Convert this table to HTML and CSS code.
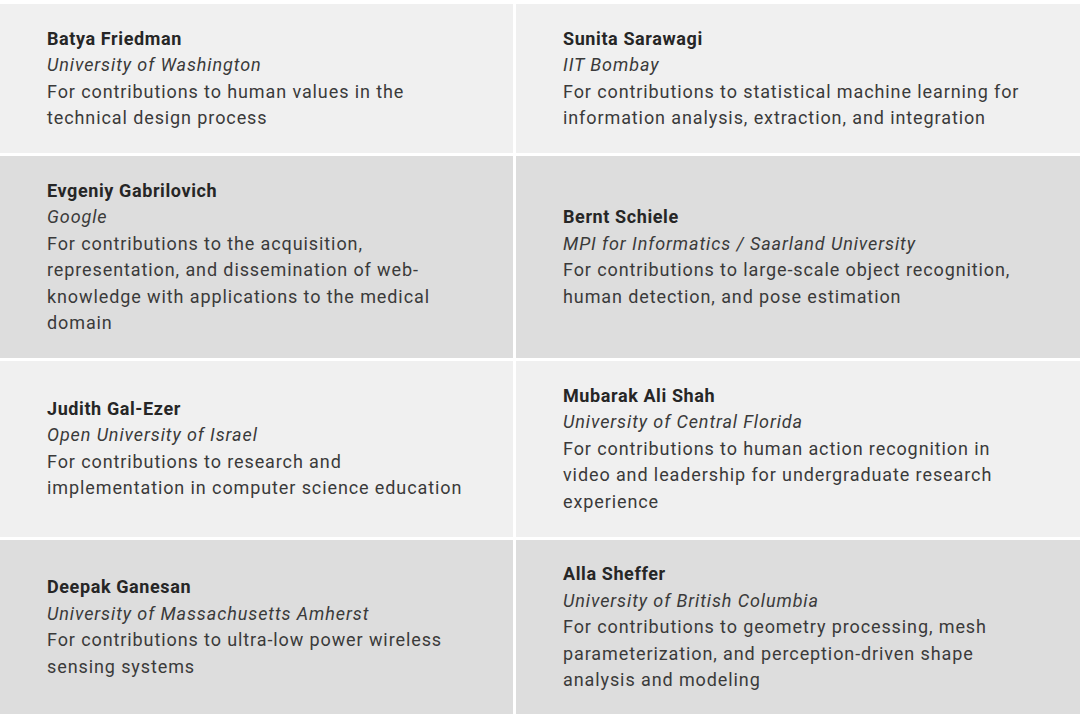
FILE: index.html
```html
<!DOCTYPE html>
<html>
<head>
<meta charset="utf-8">
<link rel="stylesheet" href="styles.css">
</head>
<body>
<div class="grid">
  <div class="cell light">
    <div class="entry">
      <div class="name">Batya Friedman</div>
      <div class="org">University of Washington</div>
      <div class="desc">For contributions to human values in the technical design process</div>
    </div>
  </div>
  <div class="cell light">
    <div class="entry">
      <div class="name">Sunita Sarawagi</div>
      <div class="org">IIT Bombay</div>
      <div class="desc">For contributions to statistical machine learning for information analysis, extraction, and integration</div>
    </div>
  </div>
  <div class="cell dark">
    <div class="entry">
      <div class="name">Evgeniy Gabrilovich</div>
      <div class="org">Google</div>
      <div class="desc">For contributions to the acquisition, representation, and dissemination of web-knowledge with applications to the medical domain</div>
    </div>
  </div>
  <div class="cell dark">
    <div class="entry">
      <div class="name">Bernt Schiele</div>
      <div class="org">MPI for Informatics / Saarland University</div>
      <div class="desc">For contributions to large-scale object recognition, human detection, and pose estimation</div>
    </div>
  </div>
  <div class="cell light">
    <div class="entry">
      <div class="name">Judith Gal-Ezer</div>
      <div class="org">Open University of Israel</div>
      <div class="desc">For contributions to research and implementation in computer science education</div>
    </div>
  </div>
  <div class="cell light">
    <div class="entry">
      <div class="name">Mubarak Ali Shah</div>
      <div class="org">University of Central Florida</div>
      <div class="desc">For contributions to human action recognition in video and leadership for undergraduate research experience</div>
    </div>
  </div>
  <div class="cell dark">
    <div class="entry">
      <div class="name">Deepak Ganesan</div>
      <div class="org">University of Massachusetts Amherst</div>
      <div class="desc">For contributions to ultra-low power wireless sensing systems</div>
    </div>
  </div>
  <div class="cell dark">
    <div class="entry">
      <div class="name">Alla Sheffer</div>
      <div class="org">University of British Columbia</div>
      <div class="desc">For contributions to geometry processing, mesh parameterization, and perception-driven shape analysis and modeling</div>
    </div>
  </div>
</div>
</body>
</html>
```
FILE: styles.css
```css
html, body {
  margin: 0;
  padding: 0;
  background: #ffffff;
}
body {
  font-family: Roboto, "Liberation Sans", Arial, sans-serif;
  font-size: 18px;
  line-height: 26.5px;
  letter-spacing: 0.9px;
  color: #3a3a3a;
}
.grid {
  display: grid;
  grid-template-columns: 513px 564px;
  column-gap: 3px;
  row-gap: 3px;
  padding-top: 4px;
}
.cell {
  display: flex;
  align-items: center;
  padding: 21.5px 43px 21.5px 47px;
}
.light {
  background: #f0f0f0;
}
.dark {
  background: #dddddd;
}
.name {
  font-weight: 700;
  letter-spacing: 0.6px;
  color: #262626;
}
.org {
  font-style: italic;
  color: #3a3a3a;
}
```
